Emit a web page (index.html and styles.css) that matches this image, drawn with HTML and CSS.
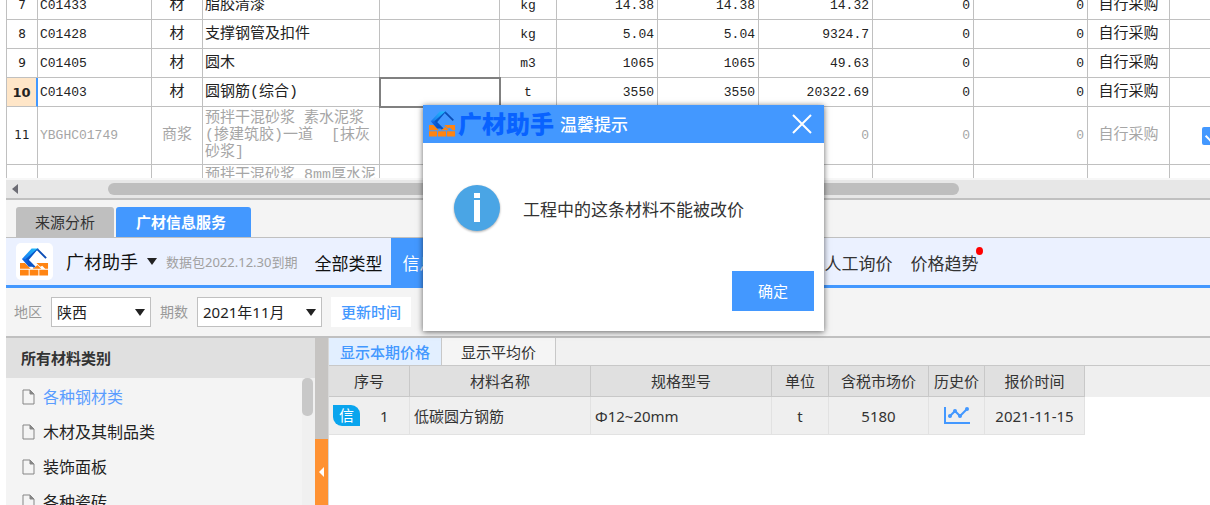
FILE: index.html
```html
<!DOCTYPE html>
<html lang="zh-CN">
<head>
<meta charset="utf-8">
<title>广材助手</title>
<link rel="stylesheet" href="styles.css">
</head>
<body>
<svg class="sprite" aria-hidden="true">
  <defs>
    <linearGradient id="beam" x1="1" y1="0" x2="0" y2="1"><stop offset="0" stop-color="#22c0fb"/><stop offset="1" stop-color="#1672ee"/></linearGradient>
    <linearGradient id="beam-low" x1="0" y1="0" x2="1" y2="1"><stop offset="0" stop-color="#1068ea"/><stop offset="1" stop-color="#0a48b4"/></linearGradient>
  </defs>
  <symbol id="brand" viewBox="0 0 30 28">
    <path fill="#ff8412" d="M0 15h5l6 6H0zM16 19l2-2 4 4h-9zM17 15h12v6h-3l-3-3 2-2-2 2-2 1zM0 22h9v6H0zM10 22h9v6h-9zM20 22h9v6h-9z"/>
    <path fill="url(#beam)" d="M12 0h7L8 12l-6-1z"/>
    <path fill="url(#beam-low)" d="M2 11h6l8 8h-7z"/>
    <path fill="#0a56c8" d="M18 0h1L9 12l7 7-2 1-8-9z"/>
    <path d="M18 1l9 9" fill="none" stroke="#0b4db5" stroke-width="2"/>
  </symbol>
  <symbol id="page" viewBox="0 0 14 16">
    <path d="M1 1h7l4 4v10H1z" fill="none" stroke="#858585"/>
    <path d="M8 1v4h4z" fill="#858585" stroke="#858585"/>
  </symbol>
</svg>
<main class="app">
  <section class="materials">
    <table class="grid">
      <colgroup><col class="w-no"><col class="w-code"><col class="w-kind"><col class="w-name"><col class="w-spec"><col class="w-unit"><col class="w-num"><col class="w-num"><col class="w-wide"><col class="w-num"><col class="w-wide"><col class="w-way"><col class="w-check"></colgroup>
      <tbody>
      <tr><th>7</th><td class="mono">C01433</td><td class="mid">材</td><td>脂胶清漆</td><td></td><td class="mono mid">kg</td><td class="mono num">14.38</td><td class="mono num">14.38</td><td class="mono num">14.32</td><td class="mono num">0</td><td class="mono num">0</td><td class="mid">自行采购</td><td></td></tr>
      <tr><th>8</th><td class="mono">C01428</td><td class="mid">材</td><td>支撑钢管及扣件</td><td></td><td class="mono mid">kg</td><td class="mono num">5.04</td><td class="mono num">5.04</td><td class="mono num">9324.7</td><td class="mono num">0</td><td class="mono num">0</td><td class="mid">自行采购</td><td></td></tr>
      <tr><th>9</th><td class="mono">C01405</td><td class="mid">材</td><td>圆木</td><td></td><td class="mono mid">m3</td><td class="mono num">1065</td><td class="mono num">1065</td><td class="mono num">49.63</td><td class="mono num">0</td><td class="mono num">0</td><td class="mid">自行采购</td><td></td></tr>
      <tr class="current"><th>10</th><td class="mono">C01403</td><td class="mid">材</td><td>圆钢筋(综合)</td><td class="focus"></td><td class="mono mid">t</td><td class="mono num">3550</td><td class="mono num">3550</td><td class="mono num">20322.69</td><td class="mono num">0</td><td class="mono num">0</td><td class="mid">自行采购</td><td></td></tr>
      <tr class="tall locked"><th>11</th><td class="mono">YBGHC01749</td><td class="mid">商浆</td><td>预拌干混砂浆 素水泥浆<br>(掺建筑胶)一道&nbsp; [抹灰<br>砂浆]</td><td></td><td></td><td></td><td></td><td class="mono num">0</td><td class="mono num">0</td><td class="mono num">0</td><td class="mid">自行采购</td><td class="mid"><input class="tick" type="checkbox" checked aria-label="第11行选中"></td></tr>
      <tr class="tall locked cut"><th></th><td></td><td></td><td>预拌干混砂浆 8mm厚水泥</td><td></td><td></td><td></td><td></td><td></td><td></td><td></td><td></td><td></td></tr>
      </tbody>
    </table>
  </section>
  <div class="hbar"><span class="hbar-arrow"></span><span class="hbar-thumb"></span></div>

  <nav class="tabs">
    <button class="tab">来源分析</button>
    <button class="tab tab-on">广材信息服务</button>
  </nav>

  <header class="service">
    <span class="logo"><svg class="logo-mark"><use href="#brand"/></svg></span>
    <button class="product">广材助手<span class="caret"></span></button>
    <span class="expiry">数据包2022.12.30到期</span>
    <nav class="types">
      <a class="type" href="#all">全部类型</a>
      <a class="type type-on" href="#info">信息价</a>
      <a class="type" href="#ask">人工询价</a>
      <a class="type trend" href="#trend">价格趋势</a>
    </nav>
  </header>

  <form class="filters">
    <label for="area">地区</label>
    <span class="pick pick-area"><select id="area"><option>陕西</option></select></span>
    <label for="period">期数</label>
    <span class="pick pick-period"><select id="period"><option>2021年11月</option></select></span>
    <button class="refresh" type="button">更新时间</button>
  </form>

  <div class="body">
    <aside class="side">
      <h2 class="side-title">所有材料类别</h2>
      <div class="side-scroll">
        <ul class="cats">
          <li><a class="cat cat-on" href="#steel"><svg class="page"><use href="#page"/></svg>各种钢材类</a></li>
          <li><a class="cat" href="#wood"><svg class="page"><use href="#page"/></svg>木材及其制品类</a></li>
          <li><a class="cat" href="#board"><svg class="page"><use href="#page"/></svg>装饰面板</a></li>
          <li><a class="cat" href="#tile"><svg class="page"><use href="#page"/></svg>各种瓷砖</a></li>
        </ul>
        <div class="vbar"><span class="vbar-thumb"></span></div>
      </div>
    </aside>
    <div class="split"><button class="fold" aria-label="收起"><span class="fold-arrow"></span></button></div>
    <section class="prices">
      <nav class="views">
        <button class="view view-on">显示本期价格</button>
        <button class="view">显示平均价</button>
      </nav>
      <div class="price-wrap">
        <table class="price">
          <colgroup><col class="p-no"><col class="p-long"><col class="p-long"><col class="p-unit"><col class="p-cost"><col class="p-hist"><col class="p-date"></colgroup>
          <thead><tr><th>序号</th><th>材料名称</th><th>规格型号</th><th>单位</th><th>含税市场价</th><th>历史价</th><th>报价时间</th></tr></thead>
          <tbody><tr>
            <td><div class="seq"><span class="badge">信</span><span class="seq-no">1</span></div></td>
            <td class="left">低碳圆方钢筋</td><td class="left">Φ12~20mm</td><td>t</td><td>5180</td>
            <td><svg class="chart" viewBox="0 0 26 19"><path d="M1 1v16h25" fill="none" stroke="#4398ff" stroke-width="2"/><path d="M5 11l6-6 5 5 7-7" fill="none" stroke="#4398ff" stroke-width="2"/><g fill="#4398ff"><circle cx="6" cy="10" r="2"/><circle cx="11" cy="5" r="2"/><circle cx="16" cy="10" r="2"/><circle cx="23" cy="3" r="2"/></g></svg></td>
            <td>2021-11-15</td>
          </tr></tbody>
        </table>
      </div>
    </section>
  </div>
</main>

<div class="dialog" role="dialog" aria-labelledby="tip-title">
  <div class="dialog-bar">
    <svg class="dialog-mark"><use href="#brand"/></svg>
    <span class="dialog-brand">广材助手</span>
    <h1 class="dialog-title" id="tip-title">温馨提示</h1>
    <button class="close" aria-label="关闭"><svg width="20" height="20" viewBox="0 0 20 20"><path d="M1 1l18 18M19 1L1 19" stroke="#fff" stroke-width="2"/></svg></button>
  </div>
  <div class="dialog-msg">
    <svg class="info" viewBox="0 0 46 46"><circle cx="23" cy="23" r="23" fill="#4aa5e5"/><path d="M20 8h6v5h-6zM20 15h6v22h-6z" fill="#fff"/></svg>
    <p>工程中的这条材料不能被改价</p>
  </div>
  <div class="dialog-foot"><button class="ok">确定</button></div>
</div>
</body>
</html>
```
FILE: styles.css
```css
* { box-sizing: border-box; }
body {
  margin: 0;
  height: 100vh;
  overflow: hidden;
  position: relative;
  background: #fff;
  color: #333;
  font: 15px/20px "Noto Sans", "Noto Sans CJK SC", sans-serif;
}
button, select { font: inherit; color: inherit; border: 0; padding: 0; background: none; border-radius: 0; }
a { color: inherit; text-decoration: none; }
h1, h2, p, ul { margin: 0; padding: 0; }
ul { list-style: none; }
table { border-spacing: 0; table-layout: fixed; }
.sprite { position: absolute; width: 0; height: 0; }
.app { margin-left: 6px; height: 100%; display: flex; flex-direction: column; background: #f4f4f4; }

/* material grid, scrolled so that row 7 is partly out of view */
.materials { flex: none; height: 178px; overflow: hidden; background: #fff; }
.grid { width: 1247px; margin-top: -9px; color: #222; font-family: "Liberation Mono", "Noto Sans CJK SC", monospace; line-height: 17px; border-left: 1px solid #c0c0c0; }
.w-no { width: 31px; }
.w-code { width: 114px; }
.w-kind { width: 51px; }
.w-name { width: 177px; }
.w-spec { width: 120px; }
.w-unit { width: 57px; }
.w-num { width: 101px; }
.w-wide { width: 114px; }
.w-way { width: 82px; }
.grid tr { height: 29px; }
.grid .tall { height: 58px; }
.grid td, .grid th { padding: 0 2px; border-right: 1px solid #c0c0c0; border-bottom: 1px solid #c0c0c0; white-space: nowrap; }
.grid th { padding: 0; font: 12px/17px "DejaVu Sans", sans-serif; text-align: center; }
.grid .current th { background: #ffe6c8; font-weight: bold; font-size: 13px; border-right: 2px solid #4398ff; }
.grid .mono { font-size: 13px; }
.grid .mid { text-align: center; }
.grid .num { text-align: right; padding-right: 3px; }
.grid .focus { outline: 2px solid #808080; outline-offset: -1px; }
.locked td { color: #a6a6a6; }
.cut td { vertical-align: top; padding-top: 2px; }
.tick { appearance: none; display: inline-block; vertical-align: middle; width: 18px; height: 18px; margin: 0; border-radius: 2px; background: #4398ff; }
.tick::after { content: ""; display: block; width: 10px; height: 6px; margin: 4px; border: solid #fff; border-width: 0 0 2px 2px; transform: rotate(-45deg); }

.hbar { flex: none; height: 22px; padding: 5px 0 5px 6px; display: flex; align-items: center; background: #e7e7e7; border-top: 2px solid #f7f7f7; border-bottom: 2px solid #c0c0c0; }
.hbar-arrow { border: solid transparent; border-width: 5px 6px 5px 0; border-right-color: #6d6d75; }
.hbar-thumb { width: 71%; height: 12px; margin-left: 90px; border-radius: 6px; background: #bebebe; }

.tabs { flex: none; display: flex; gap: 2px; padding: 7px 10px 0; border-bottom: 1px solid #c0c0c0; }
.tab { height: 30px; padding: 0 19px; border-radius: 3px 3px 0 0; background: #bfbfbf; }
.tab-on { padding: 0 25px 0 20px; background: #4398ff; color: #fff; font-weight: bold; }

.service { flex: none; height: 50px; display: flex; align-items: center; padding-left: 10px; background: #ebf1ff; border-bottom: 3px solid #4398ff; }
.logo { width: 37px; height: 37px; display: grid; place-items: center; border-radius: 5px; background: #fff; }
.logo-mark { width: 29px; height: 28px; }
.product { display: flex; align-items: center; gap: 9px; margin-left: 13px; font-size: 18px; color: #111; }
.caret { border: solid transparent; border-width: 7px 5px 0; border-top-color: #222; }
.expiry { margin-left: 9px; font-size: 13px; color: #a0a0a0; }
.types { align-self: stretch; display: flex; margin-left: 8px; font-size: 17px; }
.type { display: flex; align-items: center; padding: 4px 9px 0; }
.type:first-child { color: #111; }
.type-on { width: 424px; padding-left: 11px; background: #4398ff; color: #fff; }
.trend { position: relative; }
.trend::after { content: ""; position: absolute; top: 9px; right: 4px; width: 7px; height: 8px; border-radius: 50%; background: #f00; }

.filters { flex: none; height: 48px; display: flex; align-items: center; gap: 9px; padding-left: 8px; }
.filters label { font-size: 14px; color: #999; }
.pick { position: relative; }
.pick::after { content: ""; position: absolute; top: 12px; right: 6px; border: solid transparent; border-width: 7px 5px 0; border-top-color: #222; pointer-events: none; }
.pick select { appearance: none; display: block; width: 100%; height: 30px; padding: 0 5px; border: 1px solid #c0c0c0; background: #fff; color: #222; }
.pick-area { width: 100px; }
.pick-period { width: 125px; }
.refresh { height: 30px; padding: 0 10px; background: #fff; color: #4398ff; font-weight: 500; }

.body { flex: 1; min-height: 0; display: flex; border-top: 2px solid #c0c0c0; }
.side { width: 309px; display: flex; flex-direction: column; }
.side-title { height: 40px; padding-left: 15px; background: #e0e0e0; font-size: 15px; line-height: 40px; }
.side-scroll { flex: 1; min-height: 0; display: flex; overflow: hidden; }
.cats { flex: 1; padding-top: 1px; }
.cat { display: flex; align-items: center; gap: 7px; height: 35px; padding-left: 16px; font-size: 16px; color: #222; }
.cat-on { color: #5b9dff; }
.page { width: 14px; height: 16px; }
.vbar { width: 13px; background: #f0f0f0; }
.vbar-thumb { display: block; width: 11px; height: 38px; border-radius: 5px; background: #c8c8c8; }
.split { width: 14px; padding-top: 101px; border-right: 1px solid #d8d8d8; background: #c6c4c2; }
.fold { width: 100%; height: 66px; display: grid; place-items: center; background: #ff9232; }
.fold-arrow { border: solid transparent; border-width: 5px 5px 5px 0; border-right-color: #fff; }

.prices { flex: 1; min-width: 0; overflow: hidden; background: #fff; }
.views { display: flex; height: 28px; background: #f1f1f1; border-bottom: 1px solid #c8c8c8; }
.view { padding: 0 19px; border-right: 1px solid #c8c8c8; background: #f5f5f5; }
.view-on { padding: 0 11px; background: #e2efff; color: #4398ff; font-weight: 500; }
.price-wrap { background: linear-gradient(#efefef 31px, #fff 31px); }
.price { width: 756px; text-align: center; }
.p-no { width: 81px; }
.p-long { width: 181px; }
.p-unit { width: 57px; }
.p-cost { width: 100px; }
.p-hist { width: 56px; }
.p-date { width: 100px; }
.price th { height: 31px; padding: 0; background: #e0e0e0; border: solid #c8c8c8; border-width: 0 1px 1px 0; font-weight: normal; }
.price td { height: 38px; padding: 0; background: #efefef; border: solid #e2e2e2; border-width: 0 1px 1px 0; }
.price .left { padding-left: 4px; text-align: left; }
.seq { display: flex; align-items: center; gap: 20px; padding-left: 4px; }
.badge { width: 27px; height: 21px; border-radius: 0 9px 0 9px; background: #0aa5ee; color: #fff; font-size: 15px; line-height: 20px; }
.chart { display: block; width: 26px; height: 19px; margin: auto; }

.dialog { position: absolute; left: 423px; top: 105px; width: 401px; background: #fff; box-shadow: 0 1px 6px rgba(0, 0, 0, .6); }
.dialog-bar { height: 38px; display: flex; align-items: center; padding: 0 12px 0 6px; background: #4398ff; color: #fff; }
.dialog-mark { width: 27px; height: 26px; }
.dialog-brand { margin-left: 2px; color: #0862ff; font-size: 24px; font-weight: 900; line-height: 28px; }
.dialog-title { margin-left: 6px; padding-top: 2px; font-size: 17px; font-weight: 500; }
.close { margin-left: auto; width: 20px; height: 20px; }
.close svg { display: block; }
.dialog-msg { display: flex; align-items: center; gap: 23px; padding: 42px 31px 0; font-size: 17px; line-height: 24px; }
.dialog-msg p { padding-top: 4px; }
.info { width: 46px; height: 46px; filter: drop-shadow(0 1px 1px #aaa); }
.dialog-foot { display: flex; justify-content: flex-end; padding: 40px 10px 20px; }
.ok { width: 82px; height: 40px; background: #4398ff; color: #fff; }
```
